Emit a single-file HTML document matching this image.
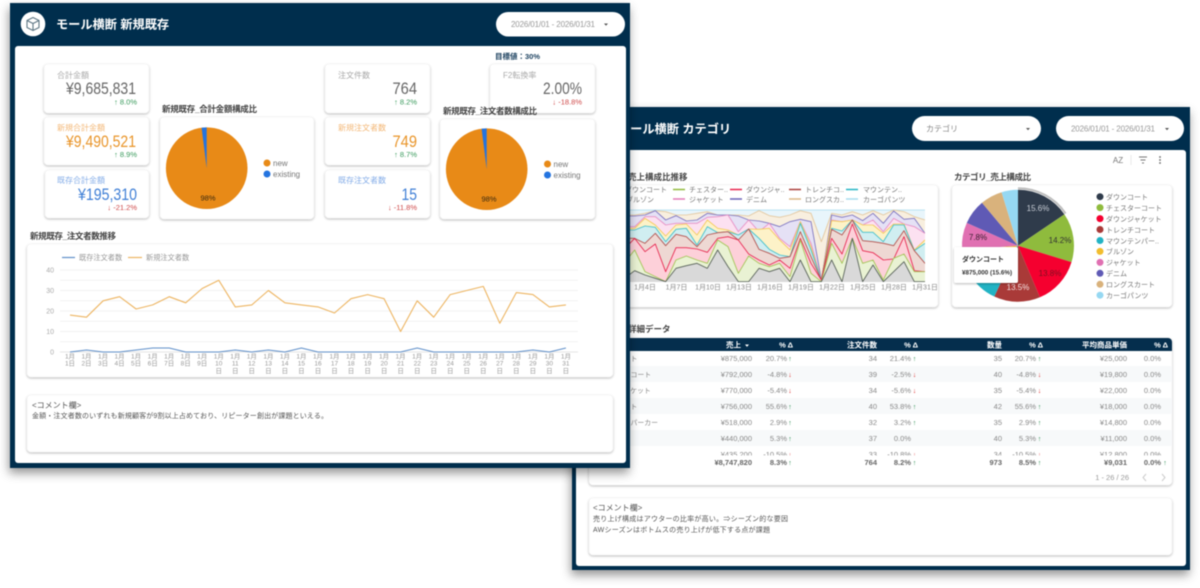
<!DOCTYPE html>
<html lang="ja">
<head>
<meta charset="utf-8">
<title>モール横断</title>
<style>
html,body{margin:0;padding:0;background:#fff;width:1200px;height:588px;overflow:hidden}
svg{display:block;filter:blur(.45px)}
text{font-family:"Liberation Sans","Noto Sans CJK JP",sans-serif;fill:#777}
.card{fill:#fff;stroke:#f1f1f1;stroke-width:.6;filter:url(#cs)}
.t{font-size:8.5px;font-weight:700;fill:#444}
.lb{font-size:8px;fill:#aaa}
.v{font-size:16.5px;text-anchor:end;fill:#666}
.d{font-size:7.5px;text-anchor:end}
.up{fill:#3a9a5c}.dn{fill:#cf4a4a}
.date{font-size:8px;fill:#999}
.leg{font-size:7px;fill:#777}
.pl{font-size:8px;fill:#777}
.x{font-size:6.5px;fill:#999;text-anchor:middle}
.y{font-size:7px;fill:#aaa;text-anchor:end}
.ax{font-size:7px;fill:#888;text-anchor:middle}
.h{font-size:7.5px;font-weight:700;fill:#fff;text-anchor:end}
.r{font-size:7.5px;fill:#888;text-anchor:end}
.b{font-size:7.5px;font-weight:700;fill:#666;text-anchor:end}
.c{font-size:7px;fill:#555}
.a{font-size:7px;text-anchor:middle;font-weight:700}
.au{fill:#2f8f55}.ad{fill:#d33}
</style>
</head>
<body>
<svg width="1200" height="588" viewBox="0 0 1200 588" xmlns="http://www.w3.org/2000/svg">
<defs>
<filter id="cs" x="-10%" y="-10%" width="120%" height="125%"><feDropShadow dx="0" dy="1" stdDeviation="1" flood-color="#000" flood-opacity=".28"/></filter>
<filter id="ws" x="-5%" y="-5%" width="110%" height="112%"><feDropShadow dx="-1" dy="5" stdDeviation="5" flood-color="#000" flood-opacity=".42"/></filter>
<clipPath id="ac"><rect x="20" y="320" width="895" height="226"/></clipPath>
</defs>

<!-- RIGHT WINDOW -->
<rect x="572" y="107" width="618" height="463" fill="#052e4d" filter="url(#ws)"/>
<rect x="576" y="150" width="610" height="416" rx="3" fill="#fff"/>
<text x="618" y="133" style="font-size:12.2px;font-weight:700;fill:#fff">モール横断 カテゴリ</text>
<rect x="912" y="116" width="129" height="25" rx="12.5" fill="#fff"/>
<text x="926" y="131.5" style="font-size:8px;fill:#888">カテゴリ</text>
<path d="M1026 128h4l-2 2.2z" fill="#555"/>
<rect x="1056" y="116" width="128" height="25" rx="12.5" fill="#fff"/>
<text x="1071" y="131.5" class="date" textLength="84" lengthAdjust="spacing">2026/01/01 - 2026/01/31</text>
<path d="M1165 128h4l-2 2.2z" fill="#555"/>

<text x="1118" y="163" style="font-size:8px;fill:#777;text-anchor:middle">AZ</text>
<path d="M1131 155v10" stroke="#e4e4e4" stroke-width=".8"/>
<path d="M1139 157h8M1140.5 160h5M1142 163h2" stroke="#777" stroke-width=".9" fill="none"/>
<circle cx="1160" cy="157" r=".9" fill="#666"/><circle cx="1160" cy="160" r=".9" fill="#666"/><circle cx="1160" cy="163" r=".9" fill="#666"/>

<text x="628" y="180" class="t">売上構成比推移</text>
<rect x="600" y="185" width="338" height="122" rx="4" class="card"/>
<text x="625" y="192" class="leg">ダウンコート</text>
<text x="626" y="202" class="leg">ブルゾン</text>
<path d="M673 189.5h12" stroke="#93ba3e" stroke-width="1.5"/><text x="689" y="192" class="leg">チェスター..</text>
<path d="M730 189.5h12" stroke="#e8264f" stroke-width="1.5"/><text x="746" y="192" class="leg">ダウンジャ..</text>
<path d="M789 189.5h12" stroke="#ab3f3b" stroke-width="1.5"/><text x="805" y="192" class="leg">トレンチコ..</text>
<path d="M846 189.5h12" stroke="#26b5c5" stroke-width="1.5"/><text x="863" y="192" class="leg">マウンテン..</text>
<path d="M673 199h12" stroke="#e27ab8" stroke-width="1.5"/><text x="689" y="202" class="leg">ジャケット</text>
<path d="M730 199h12" stroke="#6a62b8" stroke-width="1.5"/><text x="746" y="202" class="leg">デニム</text>
<path d="M789 199h12" stroke="#ddb887" stroke-width="1.5"/><text x="805" y="202" class="leg">ロングスカ..</text>
<path d="M846 199h12" stroke="#a9dcef" stroke-width="1.5"/><text x="863" y="202" class="leg">カーゴパンツ</text>

<g transform="translate(620 100) scale(.33333)" clip-path="url(#ac)" stroke-width="2.6" stroke-linejoin="round">
<polygon fill="#e8f5fb" stroke="#a9dcef" points="20,330 925,330 925,560 20,560"/>
<polygon fill="#f8efdf" stroke="#e3c79e" points="20,345 44,345 75,340 106,332 137,335 168,345 199,345 231,340 262,335 293,345 324,345 355,345 386,348 417,332 448,347 479,352 510,345 541,332 573,340 604,425 635,340 666,345 697,335 728,345 759,332 790,345 821,330 852,335 883,350 915,360 925,362 925,560 20,560"/>
<polygon fill="#e5e1f5" stroke="#7a72c0" points="20,348 44,348 75,345 106,332 137,360 168,347 199,363 231,360 262,340 293,345 324,345 355,348 386,360 417,363 448,370 479,380 510,365 541,358 573,365 604,540 635,345 666,352 697,345 728,362 759,340 790,370 821,333 852,358 883,355 915,400 925,410 925,560 20,560"/>
<polygon fill="#fce1f1" stroke="#e78ec4" points="20,380 44,380 75,350 106,350 137,375 168,370 199,370 231,370 262,352 293,350 324,345 355,395 386,360 417,395 448,370 479,415 510,440 541,365 573,430 604,540 635,360 666,365 697,360 728,375 759,360 790,395 821,355 852,372 883,380 915,400 925,405 925,560 20,560"/>
<polygon fill="#fdf2c8" stroke="#f4ca58" points="20,385 44,385 75,355 106,375 137,408 168,375 199,372 231,405 262,360 293,385 324,390 355,405 386,387 417,388 448,385 479,420 510,450 541,365 573,440 604,540 635,362 666,365 697,360 728,375 759,375 790,400 821,372 852,372 883,450 915,420 925,415 925,560 20,560"/>
<polygon fill="#d0eef1" stroke="#3fbfcd" points="20,390 44,390 75,378 106,382 137,425 168,388 199,385 231,435 262,380 293,398 324,395 355,405 386,387 417,415 448,448 479,465 510,470 541,370 573,450 604,540 635,385 666,393 697,360 728,397 759,397 790,425 821,375 852,375 883,452 915,430 925,425 925,560 20,560"/>
<polygon fill="#eed8d3" stroke="#b4514d" points="20,415 44,415 75,430 106,400 137,437 168,403 199,410 231,440 262,405 293,398 324,395 355,420 386,387 417,448 448,460 479,475 510,470 541,395 573,470 604,540 635,388 666,405 697,360 728,422 759,425 790,430 821,437 852,392 883,452 915,490 925,495 925,560 20,560"/>
<polygon fill="#fdd0d9" stroke="#e8264f" points="20,440 44,415 75,455 106,432 137,515 168,443 199,443 231,447 262,457 293,415 324,410 355,420 386,462 417,480 448,495 479,480 510,505 541,415 573,490 604,540 635,415 666,462 697,372 728,452 759,458 790,480 821,477 852,410 883,512 915,515 925,515 925,560 20,560"/>
<polygon fill="#e9f2d3" stroke="#a2c455" points="20,480 44,450 75,515 106,530 137,545 168,480 199,468 231,480 262,490 293,420 324,440 355,520 386,468 417,490 448,500 479,490 510,530 541,420 573,520 604,545 635,430 666,490 697,415 728,490 759,480 790,540 821,475 852,462 883,515 915,515 925,515 925,560 20,560"/>
<polygon fill="#d9d9d9" stroke="#555f57" points="20,530 44,512 75,525 106,535 137,545 168,505 199,497 231,490 262,505 293,450 324,500 355,545 386,545 417,505 448,515 479,505 510,545 541,480 573,545 604,545 635,480 666,545 697,415 728,545 759,495 790,545 821,515 852,485 883,545 915,545 925,545 925,560 20,560"/>
</g>
<text x="645" y="289.5" class="ax">1月4日</text><text x="676.5" y="289.5" class="ax">1月7日</text><text x="708" y="289.5" class="ax">1月10日</text><text x="739" y="289.5" class="ax">1月13日</text><text x="770" y="289.5" class="ax">1月16日</text><text x="801" y="289.5" class="ax">1月19日</text><text x="832" y="289.5" class="ax">1月22日</text><text x="863" y="289.5" class="ax">1月25日</text><text x="894" y="289.5" class="ax">1月28日</text><text x="925" y="289.5" class="ax">1月31日</text>

<text x="954" y="180" class="t" textLength="77" lengthAdjust="spacing">カテゴリ_売上構成比</text>
<rect x="952" y="185" width="220" height="122" rx="4" class="card"/>
<path d="M1018 245.7L1018 189.7A56 56 0 0 1 1064.4 214.4Z" fill="#2f3b4b"/>
<path d="M1018 245.7L1064.4 214.4A56 56 0 0 1 1071.5 262.1Z" fill="#8fbb3d"/>
<path d="M1018 245.7L1071.5 262.1A56 56 0 0 1 1039.9 297.3Z" fill="#f5002f"/>
<path d="M1018 245.7L1039.9 297.3A56 56 0 0 1 994.3 296.5Z" fill="#a93a38"/>
<path d="M1018 245.7L994.3 296.5A56 56 0 0 1 969.5 273.7Z" fill="#22b3c4"/>
<path d="M1018 245.7L969.5 273.7A56 56 0 0 1 962.1 249.6Z" fill="#f2bd2e"/>
<path d="M1018 245.7L962.1 249.6A56 56 0 0 1 966.8 222.9Z" fill="#e070b2"/>
<path d="M1018 245.7L966.8 222.9A56 56 0 0 1 982 202.8Z" fill="#5f5ab5"/>
<path d="M1018 245.7L982 202.8A56 56 0 0 1 1001.6 192.2Z" fill="#d9b27c"/>
<path d="M1018 245.7L1001.6 192.2A56 56 0 0 1 1018 189.7Z" fill="#96d8f2"/>
<path d="M1018 188.2A57.5 57.5 0 0 1 1065.6 213.5" fill="none" stroke="#bdbdbd" stroke-width="2"/>
<text x="1038" y="211" style="font-size:8px;fill:#c9ced6;text-anchor:middle">15.6%</text>
<text x="1060" y="243" style="font-size:8px;fill:#333;text-anchor:middle">14.2%</text>
<text x="1050" y="276" style="font-size:8px;fill:#7a1020;text-anchor:middle">13.8%</text>
<text x="1018" y="290" style="font-size:8px;fill:#f4e4e4;text-anchor:middle">13.5%</text>
<text x="978" y="240" style="font-size:8px;fill:#3a2030;text-anchor:middle">7.8%</text>
<rect x="954" y="247" width="64" height="36" rx="2" fill="#fff" filter="url(#cs)"/>
<text x="962" y="261.5" style="font-size:7px;font-weight:700;fill:#333">ダウンコート</text>
<text x="962" y="274.5" style="font-size:6.3px;font-weight:700;fill:#333">¥875,000 (15.6%)</text>

<circle cx="1100" cy="196.7" r="3.5" fill="#2f3b4b"/><text x="1106" y="199.5" class="leg">ダウンコート</text>
<circle cx="1100" cy="207.6" r="3.5" fill="#8fbb3d"/><text x="1106" y="210.4" class="leg">チェスターコート</text>
<circle cx="1100" cy="218.6" r="3.5" fill="#f5002f"/><text x="1106" y="221.4" class="leg">ダウンジャケット</text>
<circle cx="1100" cy="229.5" r="3.5" fill="#a93a38"/><text x="1106" y="232.3" class="leg">トレンチコート</text>
<circle cx="1100" cy="240.5" r="3.5" fill="#22b3c4"/><text x="1106" y="243.3" class="leg">マウンテンパー..</text>
<circle cx="1100" cy="251.4" r="3.5" fill="#f2bd2e"/><text x="1106" y="254.2" class="leg">ブルゾン</text>
<circle cx="1100" cy="262.4" r="3.5" fill="#e070b2"/><text x="1106" y="265.2" class="leg">ジャケット</text>
<circle cx="1100" cy="273.3" r="3.5" fill="#5f5ab5"/><text x="1106" y="276.1" class="leg">デニム</text>
<circle cx="1100" cy="284.3" r="3.5" fill="#d9b27c"/><text x="1106" y="287.1" class="leg">ロングスカート</text>
<circle cx="1100" cy="295.2" r="3.5" fill="#96d8f2"/><text x="1106" y="298" class="leg">カーゴパンツ</text>

<!-- TABLE -->
<text x="628" y="332" class="t">詳細データ</text>
<rect x="589" y="338" width="583" height="147" rx="4" class="card"/>
<path d="M589 351v-9a4 4 0 0 1 4-4h575a4 4 0 0 1 4 4v9z" fill="#052e4d"/>
<text x="741" y="347.5" class="h">売上</text><path d="M745 344.5h4l-2 2.4z" fill="#fff"/>
<text x="793" y="347.5" class="h">% Δ</text>
<text x="877" y="347.5" class="h">注文件数</text>
<text x="918" y="347.5" class="h">% Δ</text>
<text x="1002" y="347.5" class="h">数量</text>
<text x="1043" y="347.5" class="h">% Δ</text>
<text x="1127" y="347.5" class="h">平均商品単価</text>
<text x="1168" y="347.5" class="h">% Δ</text>

<rect x="589" y="366" width="583" height="16" fill="#f7f9fa"/>
<rect x="589" y="398" width="583" height="16" fill="#f7f9fa"/>
<rect x="589" y="430" width="583" height="16" fill="#f7f9fa"/>

<g>
<text x="596" y="361" style="font-size:6.9px;fill:#888">ダウンコート</text>
<text x="752" y="361" class="r">¥875,000</text><text x="787" y="361" class="r">20.7%</text><text x="790" y="361" class="a au">↑</text>
<text x="877" y="361" class="r">34</text><text x="911" y="361" class="r">21.4%</text><text x="914.5" y="361" class="a au">↑</text>
<text x="1002" y="361" class="r">35</text><text x="1036" y="361" class="r">20.7%</text><text x="1039.5" y="361" class="a au">↑</text>
<text x="1127" y="361" class="r">¥25,000</text><text x="1161" y="361" class="r">0.0%</text>

<text x="596" y="377" style="font-size:6.9px;fill:#888">チェスターコート</text>
<text x="752" y="377" class="r">¥792,000</text><text x="787" y="377" class="r">-4.8%</text><text x="790" y="377" class="a ad">↓</text>
<text x="877" y="377" class="r">39</text><text x="911" y="377" class="r">-2.5%</text><text x="914.5" y="377" class="a ad">↓</text>
<text x="1002" y="377" class="r">40</text><text x="1036" y="377" class="r">-4.8%</text><text x="1039.5" y="377" class="a ad">↓</text>
<text x="1127" y="377" class="r">¥19,800</text><text x="1161" y="377" class="r">0.0%</text>

<text x="596" y="393" style="font-size:6.9px;fill:#888">ダウンジャケット</text>
<text x="752" y="393" class="r">¥770,000</text><text x="787" y="393" class="r">-5.4%</text><text x="790" y="393" class="a ad">↓</text>
<text x="877" y="393" class="r">34</text><text x="911" y="393" class="r">-5.6%</text><text x="914.5" y="393" class="a ad">↓</text>
<text x="1002" y="393" class="r">35</text><text x="1036" y="393" class="r">-5.4%</text><text x="1039.5" y="393" class="a ad">↓</text>
<text x="1127" y="393" class="r">¥22,000</text><text x="1161" y="393" class="r">0.0%</text>

<text x="589" y="409" style="font-size:6.9px;fill:#888">トレンチコート</text>
<text x="752" y="409" class="r">¥756,000</text><text x="787" y="409" class="r">55.6%</text><text x="790" y="409" class="a au">↑</text>
<text x="877" y="409" class="r">40</text><text x="911" y="409" class="r">53.8%</text><text x="914.5" y="409" class="a au">↑</text>
<text x="1002" y="409" class="r">42</text><text x="1036" y="409" class="r">55.6%</text><text x="1039.5" y="409" class="a au">↑</text>
<text x="1127" y="409" class="r">¥18,000</text><text x="1161" y="409" class="r">0.0%</text>

<text x="596" y="425" style="font-size:6.9px;fill:#888">マウンテンパーカー</text>
<text x="752" y="425" class="r">¥518,000</text><text x="787" y="425" class="r">2.9%</text><text x="790" y="425" class="a au">↑</text>
<text x="877" y="425" class="r">32</text><text x="911" y="425" class="r">3.2%</text><text x="914.5" y="425" class="a au">↑</text>
<text x="1002" y="425" class="r">35</text><text x="1036" y="425" class="r">2.9%</text><text x="1039.5" y="425" class="a au">↑</text>
<text x="1127" y="425" class="r">¥14,800</text><text x="1161" y="425" class="r">0.0%</text>

<text x="596" y="441" style="font-size:6.9px;fill:#888">ブルゾン</text>
<text x="752" y="441" class="r">¥440,000</text><text x="787" y="441" class="r">5.3%</text><text x="790" y="441" class="a au">↑</text>
<text x="877" y="441" class="r">37</text><text x="911" y="441" class="r">0.0%</text>
<text x="1002" y="441" class="r">40</text><text x="1036" y="441" class="r">5.3%</text><text x="1039.5" y="441" class="a au">↑</text>
<text x="1127" y="441" class="r">¥11,000</text><text x="1161" y="441" class="r">0.0%</text>

<text x="752" y="457" class="r">¥435,200</text><text x="787" y="457" class="r">-10.5%</text><text x="790" y="457" class="a ad">↓</text>
<text x="877" y="457" class="r">33</text><text x="911" y="457" class="r">-10.8%</text><text x="914.5" y="457" class="a ad">↓</text>
<text x="1002" y="457" class="r">34</text><text x="1036" y="457" class="r">-10.5%</text><text x="1039.5" y="457" class="a ad">↓</text>
<text x="1127" y="457" class="r">¥12,800</text><text x="1161" y="457" class="r">0.0%</text>
</g>
<rect x="590" y="455.5" width="581" height="28" fill="#fff"/>
<text x="752" y="465" class="b">¥8,747,820</text><text x="787" y="465" class="b">8.3%</text><text x="790" y="465" class="a au">↑</text>
<text x="877" y="465" class="b">764</text><text x="911" y="465" class="b">8.2%</text><text x="914.5" y="465" class="a au">↑</text>
<text x="1002" y="465" class="b">973</text><text x="1036" y="465" class="b">8.5%</text><text x="1039.5" y="465" class="a au">↑</text>
<text x="1127" y="465" class="b">¥9,031</text><text x="1161" y="465" class="b">0.0%</text><text x="1165" y="465" class="a au">↑</text>
<text x="1129" y="480" class="r" style="fill:#999">1 - 26 / 26</text>
<path d="M1146 474l-3 3.5 3 3.5M1162 474l3 3.5-3 3.5" fill="none" stroke="#ccc" stroke-width="1"/>

<rect x="589" y="498" width="583" height="57" rx="4" class="card"/>
<text x="593" y="510.5" class="c" style="font-size:8px">&lt;コメント欄&gt;</text>
<text x="593" y="521" class="c" textLength="195" lengthAdjust="spacing">売り上げ構成はアウターの比率が高い。⇒シーズン的な要因</text>
<text x="593" y="532" class="c" textLength="177" lengthAdjust="spacing">AWシーズンはボトムスの売り上げが低下する点が課題</text>

<!-- LEFT WINDOW -->
<rect x="10" y="3" width="620" height="465" fill="#052e4d" filter="url(#ws)"/>
<rect x="15" y="46" width="611" height="417" rx="3" fill="#fff"/>
<circle cx="33" cy="24" r="12.3" fill="#fff"/>
<path d="M33 17.5l6 3v7l-6 3-6-3v-7zM27 20.5l6 3 6-3M33 23.5v7" fill="none" stroke="#5d7684" stroke-width="1.1" stroke-linejoin="round"/>
<text x="56" y="28.5" style="font-size:12.2px;font-weight:700;fill:#fff">モール横断 新規既存</text>
<rect x="496" y="12" width="129" height="24.5" rx="12.2" fill="#fff"/>
<text x="511" y="27" class="date" textLength="84" lengthAdjust="spacing">2026/01/01 - 2026/01/31</text>
<path d="M604 23.5h4l-2 2.2z" fill="#555"/>

<text x="495" y="59" style="font-size:7.5px;font-weight:700;fill:#1d4260">目標値：30%</text>

<rect x="44" y="64" width="105" height="49" rx="4" class="card"/>
<text x="57" y="78" class="lb">合計金額</text>
<text x="136" y="94" class="v" textLength="70" lengthAdjust="spacingAndGlyphs">¥9,685,831</text>
<text x="137" y="104.5" class="d up">↑ 8.0%</text>

<rect x="44" y="117" width="105" height="48" rx="4" class="card"/>
<text x="57" y="130.5" class="lb" style="fill:#f3b878">新規合計金額</text>
<text x="136" y="147" class="v" style="fill:#e9952a" textLength="70" lengthAdjust="spacingAndGlyphs">¥9,490,521</text>
<text x="137" y="157" class="d up">↑ 8.9%</text>

<rect x="45" y="170" width="104" height="48" rx="4" class="card"/>
<text x="57" y="183" class="lb" style="fill:#86aee8">既存合計金額</text>
<text x="137" y="200" class="v" style="fill:#3f7fd6" textLength="59" lengthAdjust="spacingAndGlyphs">¥195,310</text>
<text x="137" y="210" class="d dn">↓ -21.2%</text>

<text x="162" y="112" class="t" textLength="95" lengthAdjust="spacing">新規既存_合計金額構成比</text>
<rect x="160" y="117" width="154" height="102" rx="4" class="card"/>
<circle cx="206.7" cy="168.2" r="40.8" fill="#e88a17"/>
<path d="M206.7 168.2V127.4A40.8 40.8 0 0 0 201.6 127.7Z" fill="#2474e0"/>
<text x="208" y="200.5" style="font-size:7.5px;fill:#3a2a10;text-anchor:middle">98%</text>
<circle cx="267" cy="163" r="3.5" fill="#e88a17"/><text x="273" y="165.8" class="pl">new</text>
<circle cx="267" cy="174" r="3.5" fill="#2474e0"/><text x="273" y="176.8" class="pl">existing</text>

<rect x="325" y="64" width="105" height="49" rx="4" class="card"/>
<text x="338" y="78" class="lb">注文件数</text>
<text x="417" y="94" class="v" textLength="24.5" lengthAdjust="spacingAndGlyphs">764</text>
<text x="417" y="104.5" class="d up">↑ 8.2%</text>

<rect x="325" y="117" width="105" height="48" rx="4" class="card"/>
<text x="338" y="130.5" class="lb" style="fill:#f3b878">新規注文者数</text>
<text x="417" y="147" class="v" style="fill:#e9952a" textLength="24.5" lengthAdjust="spacingAndGlyphs">749</text>
<text x="417" y="157" class="d up">↑ 8.7%</text>

<rect x="325" y="170" width="105" height="48" rx="4" class="card"/>
<text x="338" y="183" class="lb" style="fill:#86aee8">既存注文者数</text>
<text x="417" y="200" class="v" style="fill:#3f7fd6" textLength="15.5" lengthAdjust="spacingAndGlyphs">15</text>
<text x="417" y="210" class="d dn">↓ -11.8%</text>

<rect x="490" y="64" width="105" height="49" rx="4" class="card"/>
<text x="503" y="78" class="lb">F2転換率</text>
<text x="582" y="94" class="v" textLength="39" lengthAdjust="spacingAndGlyphs">2.00%</text>
<text x="582" y="104.5" class="d dn">↓ -18.8%</text>

<text x="443" y="114" class="t" textLength="94" lengthAdjust="spacing">新規既存_注文者数構成比</text>
<rect x="440" y="119" width="155" height="100" rx="4" class="card"/>
<circle cx="486.7" cy="169.2" r="40.8" fill="#e88a17"/>
<path d="M486.7 169.2V128.4A40.8 40.8 0 0 0 481.6 128.7Z" fill="#2474e0"/>
<text x="489" y="201.5" style="font-size:7.5px;fill:#3a2a10;text-anchor:middle">98%</text>
<circle cx="547.5" cy="164" r="3.5" fill="#e88a17"/><text x="553.5" y="166.8" class="pl">new</text>
<circle cx="547.5" cy="175" r="3.5" fill="#2474e0"/><text x="553.5" y="177.8" class="pl">existing</text>

<text x="30" y="239" class="t" textLength="86" lengthAdjust="spacing">新規既存_注文者数推移</text>
<rect x="27" y="244" width="586" height="133" rx="4" class="card"/>
<path d="M62 257.5h13" stroke="#5f8fc9" stroke-width="1.2"/><text x="79" y="260" style="font-size:7.2px;fill:#999">既存注文者数</text>
<path d="M128 257.5h14" stroke="#edb562" stroke-width="1.2"/><text x="146" y="260" style="font-size:7.2px;fill:#999">新規注文者数</text>
<path d="M60 270H578M60 280.25H578M60 290.5H578M60 300.75H578M60 311H578M60 321.25H578M60 331.5H578M60 341.75H578" stroke="#eee" stroke-width=".7" fill="none"/>
<path d="M60 352H578" stroke="#ddd" stroke-width=".7"/>
<text x="54" y="272.5" class="y">40</text><text x="54" y="293" class="y">30</text><text x="54" y="313.5" class="y">20</text><text x="54" y="334" class="y">10</text><text x="54" y="354.5" class="y">0</text>
<polyline fill="none" stroke="#edb562" stroke-width="1.1" stroke-linejoin="round" points="70,315.1 86.5,317.2 103.1,300.8 119.6,296.7 136.1,309 152.7,304.9 169.2,296.7 185.7,302.8 202.2,288.5 218.8,280.3 235.3,306.9 251.8,304.9 268.4,290.5 284.9,302.8 301.4,304.9 318,306.9 334.5,313 351,298.7 367.6,294.6 384.1,298.7 400.6,331.5 417.2,300.8 433.7,317.2 450.2,294.6 466.7,290.5 483.3,286.4 499.8,323.3 516.3,292.6 532.9,294.6 549.4,306.9 565.9,304.9"/>
<polyline fill="none" stroke="#5f8fc9" stroke-width="1" stroke-linejoin="round" points="70,352 86.5,350 103.1,352 119.6,352 136.1,350 152.7,348 169.2,348 185.7,352 202.2,352 218.8,352 235.3,350 251.8,352 268.4,350 284.9,352 301.4,348 318,352 334.5,352 351,352 367.6,352 384.1,352 400.6,352 417.2,348 433.7,352 450.2,352 466.7,352 483.3,352 499.8,352 516.3,352 532.9,350 549.4,352 565.9,348"/>

<g>
<text x="70" y="358.5" class="x">1月</text><text x="70" y="365.5" class="x">1日</text>
<text x="86.5" y="358.5" class="x">1月</text><text x="86.5" y="365.5" class="x">2日</text>
<text x="103.1" y="358.5" class="x">1月</text><text x="103.1" y="365.5" class="x">3日</text>
<text x="119.6" y="358.5" class="x">1月</text><text x="119.6" y="365.5" class="x">4日</text>
<text x="136.1" y="358.5" class="x">1月</text><text x="136.1" y="365.5" class="x">5日</text>
<text x="152.7" y="358.5" class="x">1月</text><text x="152.7" y="365.5" class="x">6日</text>
<text x="169.2" y="358.5" class="x">1月</text><text x="169.2" y="365.5" class="x">7日</text>
<text x="185.7" y="358.5" class="x">1月</text><text x="185.7" y="365.5" class="x">8日</text>
<text x="202.2" y="358.5" class="x">1月</text><text x="202.2" y="365.5" class="x">9日</text>
<text x="218.8" y="358.5" class="x">1月</text><text x="218.8" y="365.5" class="x">10</text><text x="218.8" y="373" class="x">日</text>
<text x="235.3" y="358.5" class="x">1月</text><text x="235.3" y="365.5" class="x">11</text><text x="235.3" y="373" class="x">日</text>
<text x="251.8" y="358.5" class="x">1月</text><text x="251.8" y="365.5" class="x">12</text><text x="251.8" y="373" class="x">日</text>
<text x="268.4" y="358.5" class="x">1月</text><text x="268.4" y="365.5" class="x">13</text><text x="268.4" y="373" class="x">日</text>
<text x="284.9" y="358.5" class="x">1月</text><text x="284.9" y="365.5" class="x">14</text><text x="284.9" y="373" class="x">日</text>
<text x="301.4" y="358.5" class="x">1月</text><text x="301.4" y="365.5" class="x">15</text><text x="301.4" y="373" class="x">日</text>
<text x="318" y="358.5" class="x">1月</text><text x="318" y="365.5" class="x">16</text><text x="318" y="373" class="x">日</text>
<text x="334.5" y="358.5" class="x">1月</text><text x="334.5" y="365.5" class="x">17</text><text x="334.5" y="373" class="x">日</text>
<text x="351" y="358.5" class="x">1月</text><text x="351" y="365.5" class="x">18</text><text x="351" y="373" class="x">日</text>
<text x="367.6" y="358.5" class="x">1月</text><text x="367.6" y="365.5" class="x">19</text><text x="367.6" y="373" class="x">日</text>
<text x="384.1" y="358.5" class="x">1月</text><text x="384.1" y="365.5" class="x">20</text><text x="384.1" y="373" class="x">日</text>
<text x="400.6" y="358.5" class="x">1月</text><text x="400.6" y="365.5" class="x">21</text><text x="400.6" y="373" class="x">日</text>
<text x="417.2" y="358.5" class="x">1月</text><text x="417.2" y="365.5" class="x">22</text><text x="417.2" y="373" class="x">日</text>
<text x="433.7" y="358.5" class="x">1月</text><text x="433.7" y="365.5" class="x">23</text><text x="433.7" y="373" class="x">日</text>
<text x="450.2" y="358.5" class="x">1月</text><text x="450.2" y="365.5" class="x">24</text><text x="450.2" y="373" class="x">日</text>
<text x="466.7" y="358.5" class="x">1月</text><text x="466.7" y="365.5" class="x">25</text><text x="466.7" y="373" class="x">日</text>
<text x="483.3" y="358.5" class="x">1月</text><text x="483.3" y="365.5" class="x">26</text><text x="483.3" y="373" class="x">日</text>
<text x="499.8" y="358.5" class="x">1月</text><text x="499.8" y="365.5" class="x">27</text><text x="499.8" y="373" class="x">日</text>
<text x="516.3" y="358.5" class="x">1月</text><text x="516.3" y="365.5" class="x">28</text><text x="516.3" y="373" class="x">日</text>
<text x="532.9" y="358.5" class="x">1月</text><text x="532.9" y="365.5" class="x">29</text><text x="532.9" y="373" class="x">日</text>
<text x="549.4" y="358.5" class="x">1月</text><text x="549.4" y="365.5" class="x">30</text><text x="549.4" y="373" class="x">日</text>
<text x="565.9" y="358.5" class="x">1月</text><text x="565.9" y="365.5" class="x">31</text><text x="565.9" y="373" class="x">日</text>
</g>

<rect x="27" y="395" width="586" height="57" rx="4" class="card"/>
<text x="32" y="408" class="c" style="font-size:8px">&lt;コメント欄&gt;</text>
<text x="32" y="418" class="c" textLength="296" lengthAdjust="spacing">金額・注文者数のいずれも新規顧客が9割以上占めており、リピーター創出が課題といえる。</text>
</svg>
</body>
</html>
